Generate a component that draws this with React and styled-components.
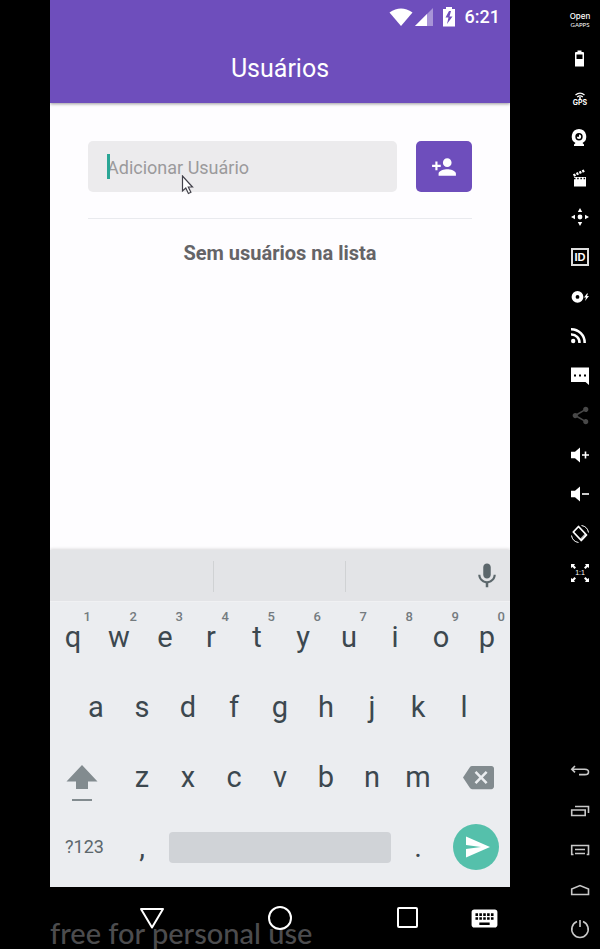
import React from "react";
import styled, { createGlobalStyle } from "styled-components";
import { MdBackspace, MdKeyboard, MdMic, MdPersonAdd, MdShare } from "react-icons/md";

const GlobalStyle = createGlobalStyle`
  * { box-sizing: border-box; }
  body { margin: 0; background: #000; font-family: Roboto, sans-serif; }
  button { border: 0; padding: 0; background: none; font: inherit; color: inherit; cursor: pointer; }
  svg { display: block; flex: none; }
`;

const Emulator = styled.div`
  display: flex;
  min-height: 100vh;
  padding-left: 50px;
  background: #000;
`;

const Device = styled.div`
  flex: 1;
  min-width: 0;
  display: flex;
  flex-direction: column;
`;

const AppHeader = styled.header`
  position: relative;
  background: #6e4ebc;
  color: #fff;
  box-shadow: 0 1px 3px rgba(0, 0, 0, 0.4);
`;

const StatusBar = styled.div`
  display: flex;
  align-items: center;
  justify-content: flex-end;
  height: 33px;
  padding-right: 10px;
  font-size: 18px;
  font-weight: 500;
`;

const Clock = styled.time`
  margin-left: 4px;
`;

const Title = styled.h1`
  margin: 0;
  height: 70px;
  line-height: 72px;
  text-align: center;
  font-size: 25px;
  font-weight: 400;
`;

const Content = styled.main`
  flex: 1;
  padding: 38px 38px 0;
  background: #fefdff;
`;

const AddForm = styled.form`
  display: flex;
  gap: 19px;
  padding-bottom: 26px;
  border-bottom: 1px solid #e9eaee;
`;

const Field = styled.div`
  position: relative;
  flex: 1;
  display: flex;
`;

const UserInput = styled.input`
  width: 100%;
  height: 51px;
  padding: 2px 19px 0;
  border: 0;
  border-radius: 5px;
  outline: 0;
  background: #ecebed;
  color: #333;
  font: 400 18px Roboto, sans-serif;
  &::placeholder { color: #9b9a9c; opacity: 1; }
`;

const Caret = styled.span`
  position: absolute;
  left: 19px;
  top: 13px;
  width: 3px;
  height: 25px;
  background: #2ba696;
`;

const Pointer = styled.svg`
  position: absolute;
  left: 93px;
  top: 34px;
`;

const AddButton = styled.button`
  display: grid;
  place-items: center;
  width: 56px;
  height: 51px;
  border-radius: 5px;
  background: #6e4ebc;
  color: #fff;
`;

const EmptyMessage = styled.p`
  margin: 22px 0 0;
  text-align: center;
  font-size: 20px;
  line-height: 25px;
  font-weight: 700;
  color: #656467;
`;

const Keyboard = styled.section`
  position: relative;
  padding-bottom: 5px;
  background: #ebedf0;
  color: #3c484f;
  box-shadow: 0 -1px 3px rgba(0, 0, 0, 0.15);
`;

const Suggestions = styled.div`
  display: grid;
  grid-template-columns: 164px 132px 1fr;
  align-items: center;
  height: 52px;
  padding-top: 1px;
  background: #e3e4e7;
  border-bottom: 1px solid #f0f1f3;
`;

const Suggestion = styled.div`
  height: 31px;
  border-right: 1px solid #d0d2d4;
`;

const MicButton = styled.button`
  justify-self: end;
  margin-right: 8px;
  color: #5c676c;
`;

const KeyRow = styled.div`
  display: grid;
  grid-template-columns: repeat(20, 1fr);
  height: 70px;
`;

const Key = styled.button`
  position: relative;
  grid-column: ${(p) => (p.$start ? `${p.$start} / ` : "")}span ${(p) => p.$span || 2};
  display: flex;
  align-items: center;
  justify-content: center;
  font-size: 29px;
  line-height: 34px;
`;

const ShiftKey = styled(Key)`
  padding: 12px 6px 0 0;
  color: #828b8f;
`;

const DeleteKey = styled(Key)`
  padding-left: 6px;
  color: #828b8f;
`;

const ModeKey = styled(Key)`
  font-size: 18px;
  color: #5c676c;
`;

const KeyHint = styled.span`
  position: absolute;
  right: 5px;
  top: 7px;
  font-size: 13px;
  line-height: 16px;
  font-weight: 500;
  color: #747b7f;
`;

const SpaceBar = styled.span`
  flex: 1;
  height: 31px;
  margin: 0 4px;
  border-radius: 4px;
  background: #d0d3d7;
`;

const SendDisc = styled.span`
  display: grid;
  place-items: center;
  width: 46px;
  height: 46px;
  border-radius: 50%;
  background: #55c0ab;
  color: #fff;
`;

const NavBar = styled.nav`
  position: relative;
  display: grid;
  height: 62px;
  padding: 0 10px 0 39px;
  color: #fff;
`;

const NavKeys = styled.div`
  position: relative;
  display: grid;
  grid-template-columns: repeat(3, 128fr) 26fr;
  align-items: center;
`;

const NavButton = styled.button`
  display: grid;
  place-items: center;
`;

const Watermark = styled.span`
  position: absolute;
  left: 0;
  bottom: -2px;
  font: 500 29px/36px Lato, sans-serif;
  color: #4c4c4e;
  white-space: nowrap;
`;

const Rail = styled.aside`
  display: grid;
  grid-template-rows: repeat(24, 1fr);
  width: 90px;
  padding-left: 50px;
  color: #fff;
`;

const RailButton = styled.button`
  grid-row: ${(p) => p.$row};
  display: flex;
  flex-direction: column;
  align-items: center;
  justify-content: center;
  color: ${(p) => (p.$tone === "off" ? "#484848" : p.$tone === "soft" ? "#c8c8c8" : "#fff")};
`;

const RailText = styled.span`
  display: block;
  font-family: ${(p) => (p.$thin ? "Lato" : "Inter")}, sans-serif;
  font-size: ${(p) => p.$size || 7}px;
  line-height: ${(p) => p.$leading || 7}px;
  font-weight: ${(p) => (p.$thin ? 400 : p.$weight || 700)};
`;

const IdBox = styled.span`
  display: grid;
  place-items: center;
  width: 18px;
  height: 18px;
  border: 2px solid #dedede;
  font: 700 11px/14px "Liberation Sans", sans-serif;
`;

const Glyph = ({ size = 20, height = size, children, ...rest }) => (
  <svg width={size} height={height} viewBox={`0 0 ${size} ${height}`} fill="currentColor" aria-hidden="true" {...rest}>
    {children}
  </svg>
);

const line = { fill: "none", stroke: "currentColor", strokeWidth: 1.6 };

const speaker = <path d="M1 6.800h4L10 2.500v15l-5-4.300H1z" />;

const railItems = [
  { row: 1, label: "Open GApps", icon: <><RailText $size={8} $leading={10} $weight={500}>Open</RailText><RailText $thin $size={6} $leading={8}>GAPPS</RailText></> },
  { row: 2, label: "Battery", icon: (
    <Glyph><path fillRule="evenodd" d="M7.500 1.500h4V3H13q1 0 1 1v13.500H5V4q0-1 1-1h1.500zM6.500 5.500V10h6V5.500z" /></Glyph>
  ) },
  { row: 3, label: "GPS", icon: <>
    <Glyph size={12} height={7}><g {...line} strokeWidth={1.300}><path d="M1.500 3Q6-.8 10.500 3M3.200 5q2.800-2.400 5.600 0" /></g><circle cx="6" cy="6" r="1" /></Glyph>
    <RailText>GPS</RailText>
  </> },
  { row: 4, label: "Camera", icon: (
    <Glyph><path fillRule="evenodd" d="M9 1a7.500 7.500 0 0 1 3.500 14l1.500 1.500V18H4v-1.500L5.500 15A7.500 7.500 0 0 1 9 1zm0 4a3.700 3.700 0 1 0 0 7.400A3.700 3.700 0 0 0 9 5z" /><path d="M9 6.500a2.200 2.200 0 1 1-2.200 2.200H9z" /></Glyph>
  ) },
  { row: 5, label: "Capture", icon: (
    <Glyph><path d="M4 9h12v9.500H4z" /><path d="M3.500 7.500 14.500 2.500" stroke="currentColor" strokeWidth="2.600" strokeDasharray="2.200 1" /><path d="M4 10.500h12" stroke="#000" strokeWidth="1.600" strokeDasharray="1.500 1.700" /></Glyph>
  ) },
  { row: 6, label: "Remote control", icon: (
    <Glyph><circle cx="10" cy="10" r="2.400" /><path d="m10 1 2.200 4H7.800zM10 19l2.200-4H7.800zM1 10l4-2.200v4.400zM19 10l-4-2.200v4.400z" /></Glyph>
  ) },
  { row: 7, label: "Identifiers", icon: <IdBox>ID</IdBox> },
  { row: 8, label: "Disk", icon: (
    <Glyph><path fillRule="evenodd" d="M7.500 4a5.900 5.900 0 1 1 0 11.800A5.900 5.900 0 0 1 7.500 4zm0 4a1.900 1.900 0 1 0 0 3.800 1.900 1.900 0 0 0 0-3.800zM17 6.500l-3 4h2L15 14l4-5h-2l1-2.500z" /></Glyph>
  ) },
  { row: 9, label: "Network", icon: (
    <Glyph><circle cx="3.200" cy="15" r="2.200" /><path fill="none" stroke="currentColor" strokeWidth="2.500" d="M1 8.500a8 8 0 0 1 8.500 8.500M1 3.200A13.500 13.500 0 0 1 14.700 17" /></Glyph>
  ) },
  { row: 10, label: "Messages", icon: (
    <Glyph><path fillRule="evenodd" d="M1 1.500h18V19l-3.500-3H1zM4 8.500v2h2v-2zm5 0v2h2v-2zm5 0v2h2v-2z" /></Glyph>
  ) },
  { row: 11, label: "Share", tone: "off", icon: <MdShare size={21} /> },
  { row: 12, label: "Volume up", icon: <Glyph>{speaker}<path d="M12 9.200h2.700V6.500h1.600v2.700H19v1.600h-2.700v2.700h-1.600v-2.700H12z" /></Glyph> },
  { row: 13, label: "Volume down", icon: <Glyph>{speaker}<path d="M12 9.200h7v1.600h-7z" /></Glyph> },
  { row: 14, label: "Rotate", icon: (
    <Glyph><g {...line} strokeLinejoin="round"><path d="m8.500 2.500 8 8.500-5.200 5.500-8-8.500z" strokeWidth="1.800" /><path d="M11.500 1.500q6 1 7 7M8.500 18.500q-6-1-7-7" strokeWidth="1" /></g><path d="m11.300 16.500 5.200-5.500-1.500-1.500-5.200 5.500z" opacity=".7" /></Glyph>
  ) },
  { row: 15, label: "Actual size", icon: (
    <Glyph><path d="M1 1h4L4 2.500l2 2L4.500 6l-2-2L1 5zM19 1h-4l1 1.500-2 2L15.500 6l2-2L19 5zM1 19h4l-1-1.500 2-2L4.500 14l-2 2L1 15zM19 19h-4l1-1.500-2-2 1.500-1.500 2 2 1.500-1z" /><text x="10" y="12" textAnchor="middle" fontFamily="Liberation Sans, sans-serif" fontSize="7">1:1</text></Glyph>
  ) },
  { row: 20, label: "Back", tone: "soft", icon: <Glyph><path {...line} d="M5 5 1.800 8.200 5 11.400M2 8.200h12.800q3.700 0 3.700 2.700t-3.700 2.700H9" /></Glyph> },
  { row: 21, label: "Recent apps", tone: "soft", icon: <Glyph><path {...line} d="M1.700 9h13.500v5.500H1.700zM5 5.500h13.500V12" /></Glyph> },
  { row: 22, label: "Menu", tone: "soft", icon: <Glyph><path {...line} d="M3.500 14.500H1.700v-9h16.800v9h-1.800M5 9.500h10M5 13.500h10" /></Glyph> },
  { row: 23, label: "Home", tone: "soft", icon: <Glyph><path {...line} d="M1.700 14.500V9L10 5.500 18.500 9v5.500z" /></Glyph> },
  { row: 24, label: "Power", tone: "soft", icon: <Glyph><path {...line} d="M7 2.600a8.200 8.200 0 1 0 6 0M10 1v7" /></Glyph> },
];

export default function App() {
  return (
    <>
      <GlobalStyle />
      <Emulator>
        <Device>
          <AppHeader>
            <StatusBar>
              <Glyph size={24} height={20}><path d="M.5 5.500Q12-2.500 23.500 5.500L12 19z" /></Glyph>
              <Glyph size={22} height={20}><path d="M20 1v18H2z" opacity=".4" /><path d="M14 7v12H2z" /></Glyph>
              <Glyph size={26} height={20}><path fillRule="evenodd" d="M11 0h6v2h3v17.500H8V2h3zm3 4-3.500 6.500h3L12 17l5.500-7.500h-3L16 4z" /></Glyph>
              <Clock>6:21</Clock>
            </StatusBar>
            <Title>Usuários</Title>
          </AppHeader>
          <Content>
            <AddForm onSubmit={(e) => e.preventDefault()}>
              <Field>
                <UserInput aria-label="Adicionar Usuário" placeholder="Adicionar Usuário" />
                <Caret />
                <Pointer width="13" height="20" viewBox="0 0 13 20" aria-hidden="true">
                  <path d="M1.500 1v15l3.300-3 2.600 5.500 2.500-1.200-2.600-5.300h4.200z" fill="#fff" stroke="#42414a" strokeWidth="1.200" />
                </Pointer>
              </Field>
              <AddButton type="submit" aria-label="Adicionar"><MdPersonAdd size={26} /></AddButton>
            </AddForm>
            <EmptyMessage>Sem usuários na lista</EmptyMessage>
          </Content>
          <Keyboard aria-label="Teclado">
            <Suggestions>
              <Suggestion />
              <Suggestion />
              <MicButton aria-label="Voz"><MdMic size={30} /></MicButton>
            </Suggestions>
            <KeyRow>
              {[..."qwertyuiop"].map((c, i) => (
                <Key key={c}>{c}<KeyHint>{(i + 1) % 10}</KeyHint></Key>
              ))}
            </KeyRow>
            <KeyRow>
              {[..."asdfghjkl"].map((c, i) => <Key key={c} $start={i * 2 + 2}>{c}</Key>)}
            </KeyRow>
            <KeyRow>
              <ShiftKey $span={3} aria-label="Shift">
                <Glyph size={32} height={38}><path d="M16 1 31.500 17.500H22V25H10v-7.500H.5zM6 35h20v2H6z" /></Glyph>
              </ShiftKey>
              {[..."zxcvbnm"].map((c) => <Key key={c}>{c}</Key>)}
              <DeleteKey $span={3} aria-label="Apagar"><MdBackspace size={31} /></DeleteKey>
            </KeyRow>
            <KeyRow>
              <ModeKey $span={3}>?123</ModeKey>
              <Key>,</Key>
              <Key $span={10} aria-label="Espaço"><SpaceBar /></Key>
              <Key>.</Key>
              <Key $span={3} aria-label="Enviar">
                <SendDisc><Glyph size={28}><path d="M4 3.500 28 14 4 24.500V16l15-2L4 12z" /></Glyph></SendDisc>
              </Key>
            </KeyRow>
          </Keyboard>
          <NavBar>
            <Watermark>free for personal use</Watermark>
            <NavKeys>
              <NavButton aria-label="Voltar"><Glyph size={26}><path {...line} strokeWidth="2" strokeLinejoin="round" d="M2 4h22L13 22.500z" /></Glyph></NavButton>
              <NavButton aria-label="Início"><Glyph size={26}><circle {...line} strokeWidth="2" cx="14" cy="13" r="11" /></Glyph></NavButton>
              <NavButton aria-label="Recentes"><Glyph size={26}><rect {...line} strokeWidth="2" x="5" y="3" width="19" height="19" rx="1" /></Glyph></NavButton>
              <NavButton aria-label="Teclado"><MdKeyboard size={31} /></NavButton>
            </NavKeys>
          </NavBar>
        </Device>
        <Rail aria-label="Ferramentas do emulador">
          {railItems.map(({ row, label, icon, tone }) => (
            <RailButton key={label} $row={row} $tone={tone} aria-label={label}>{icon}</RailButton>
          ))}
        </Rail>
      </Emulator>
    </>
  );
}
